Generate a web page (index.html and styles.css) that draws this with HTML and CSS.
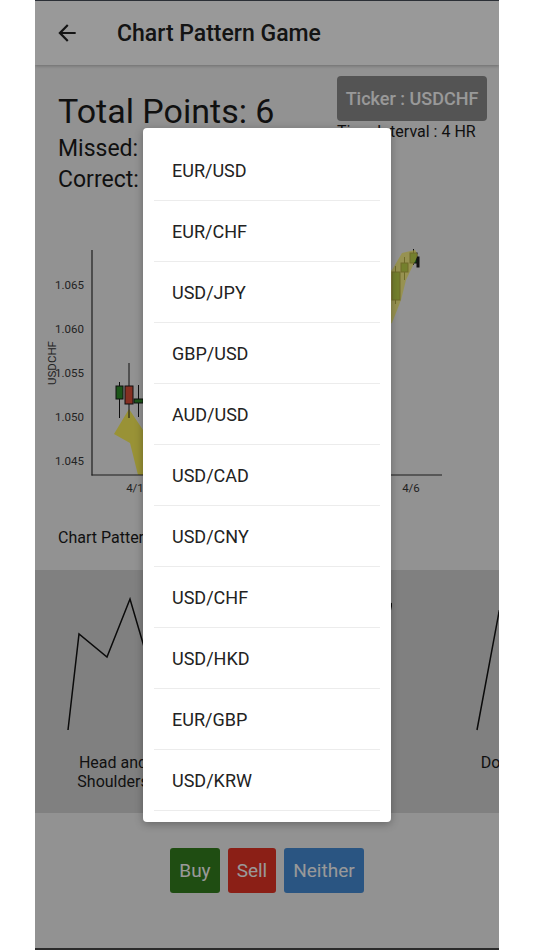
FILE: index.html
```html
<!DOCTYPE html>
<html lang="en">
<head>
    <meta charset="UTF-8">
    <meta name="viewport" content="width=device-width, initial-scale=1.0">
    <title>Chart Pattern Game</title>
    <link rel="stylesheet" href="styles.css">
</head>
<body>
    <div class="phone">
        <header class="app-bar">
            <svg class="back" viewBox="0 0 24 24" width="26" height="26">
                <path d="M20 11H7.83l5.59-5.59L12 4l-8 8 8 8 1.41-1.41L7.83 13H20v-2z" fill="#222"/>
            </svg>
            <h1 class="title">Chart Pattern Game</h1>
        </header>

        <div class="stats">
            <div class="score">
                <div class="total">Total Points: 6</div>
                <div class="line">Missed: 2</div>
                <div class="line">Correct: 6</div>
            </div>
            <div class="ticker-info">
                <div class="ticker">Ticker : USDCHF</div>
                <div class="interval">Time Interval : 4 HR</div>
            </div>
        </div>

        <!-- Candlestick chart -->
        <svg class="chart" viewBox="0 0 464 262" width="464" height="262">
            <polygon points="79,194 94,169 108,190 130,195 130,235 103,235 95,203" fill="#fff45a"/>
            <g stroke="#1a1a1a" stroke-width="1">
                <line x1="84.5" y1="142" x2="84.5" y2="178"/>
                <rect x="81" y="146" width="7" height="13" fill="#2f8f2a"/>
                <line x1="94" y1="123" x2="94" y2="178"/>
                <rect x="90" y="146" width="8" height="18" fill="#e0503a"/>
                <line x1="103.5" y1="145" x2="103.5" y2="177"/>
                <rect x="99" y="159" width="9" height="4" fill="#2f8f2a"/>
                <rect x="110" y="150" width="8" height="12" fill="#e0503a"/>
                <line x1="369.5" y1="17" x2="369.5" y2="40"/>
                <line x1="360.5" y1="26" x2="360.5" y2="64"/>
                <rect x="357" y="32" width="8" height="28" fill="#2f8f2a"/>
                <rect x="366" y="23" width="7" height="9" fill="#2f8f2a"/>
                <line x1="378.5" y1="9" x2="378.5" y2="25"/>
                <rect x="375" y="13" width="7" height="10" fill="#2f8f2a"/>
                <rect x="382" y="17" width="2" height="10" fill="#222"/>
            </g>
            <polygon points="340,90 357,83 366,60 371,40 383,15 380,10 367,13 357,30 340,40" fill="#fff45a" fill-opacity="0.7"/>
            <line x1="57" y1="10" x2="57" y2="235.5" stroke="#333" stroke-width="1.2"/>
            <line x1="56.5" y1="235" x2="407" y2="235" stroke="#333" stroke-width="1.2"/>
            <g class="tick" text-anchor="end">
                <text x="49" y="49">1.065</text>
                <text x="49" y="93">1.060</text>
                <text x="49" y="137">1.055</text>
                <text x="49" y="181">1.050</text>
                <text x="49" y="225">1.045</text>
            </g>
            <g class="tick" text-anchor="middle">
                <text x="100" y="252">4/1</text>
                <text x="376" y="252">4/6</text>
            </g>
            <text class="tick" text-anchor="middle" transform="translate(21 123) rotate(-90)">USDCHF</text>
        </svg>

        <div class="section-label">Chart Patterns:</div>

        <div class="patterns">
            <div class="pattern">
                <svg viewBox="0 0 150 175" width="150" height="175">
                    <polyline points="30,160 41,64 69,87 92,29 109,87 137,64 148,160" fill="none" stroke="#111" stroke-width="1.5"/>
                </svg>
                <div class="pattern-name">Head and Shoulders</div>
            </div>
            <div class="pattern">
                <svg viewBox="0 0 150 175" width="150" height="175">
                    <polyline points="30,40 41,120 62,95 85,150 108,95 130,120 150,33" fill="none" stroke="#111" stroke-width="1.5"/>
                </svg>
                <div class="pattern-name">Inverse Head and Shoulders</div>
            </div>
            <div class="pattern">
                <svg viewBox="0 0 150 175" width="150" height="175">
                    <polyline points="31,160 53,42 57,50 76,90 97,42 119,160" fill="none" stroke="#111" stroke-width="1.5"/>
                </svg>
                <div class="pattern-name">Double Top</div>
            </div>
        </div>

        <div class="actions">
            <button class="btn buy">Buy</button>
            <button class="btn sell">Sell</button>
            <button class="btn neither">Neither</button>
        </div>

        <!-- Ticker picker dialog -->
        <div class="overlay"></div>
        <div class="dialog">
            <ul class="pair-list">
                <li>EUR/USD</li>
                <li>EUR/CHF</li>
                <li>USD/JPY</li>
                <li>GBP/USD</li>
                <li>AUD/USD</li>
                <li>USD/CAD</li>
                <li>USD/CNY</li>
                <li>USD/CHF</li>
                <li>USD/HKD</li>
                <li>EUR/GBP</li>
                <li>USD/KRW</li>
                <li>USD/SGD</li>
            </ul>
        </div>
    </div>
</body>
</html>
```

FILE: styles.css
```css
body {
    margin: 0;
    padding: 0;
    background-color: #fff;
    font-family: Roboto, "Liberation Sans", sans-serif;
    color: #1c1c1c;
}
.phone {
    position: relative;
    width: 464px;
    height: 950px;
    margin: 0 auto;
    box-sizing: border-box;
    border-top: 1px solid #2b2f36;
    border-bottom: 2px solid #2b2b2b;
    background-color: #f3f3f3;
    overflow: hidden;
}
.app-bar {
    display: flex;
    align-items: center;
    gap: 37px;
    height: 64px;
    padding-left: 19px;
    background-color: #fff;
    box-shadow: 0 1px 3px rgba(0, 0, 0, 0.25);
}
.back {
    display: block;
}
.title {
    margin: 0;
    font-size: 23px;
    font-weight: 500;
    color: #222;
}
.stats {
    display: flex;
    justify-content: space-between;
    align-items: flex-start;
    padding: 11px 12px 0 23px;
}
.score {
    padding-top: 14px;
}
.total {
    font-size: 34px;
    line-height: 43px;
}
.line {
    font-size: 23px;
    line-height: 31px;
}
.ticker-info {
    width: 150px;
}
.ticker {
    height: 45px;
    line-height: 45px;
    text-align: center;
    border-radius: 4px;
    background-color: #8c8c8c;
    color: #fff;
    font-size: 18px;
    font-weight: 500;
}
.interval {
    margin-top: 2px;
    font-size: 16px;
    line-height: 18px;
    white-space: nowrap;
}
.chart {
    display: block;
    margin-top: 45px;
}
.tick {
    font-size: 11.5px;
    fill: #3a3a3a;
}
.section-label {
    margin: 26px 0 0 23px;
    font-size: 16px;
    line-height: 19px;
}
.patterns {
    display: flex;
    align-items: flex-start;
    gap: 54px;
    height: 243px;
    margin-top: 23px;
    padding-left: 3px;
    background-color: #d6d6d6;
    overflow: hidden;
}
.pattern {
    flex: 0 0 150px;
}
.pattern svg {
    display: block;
}
.pattern-name {
    width: 100px;
    margin: 8px auto 0;
    text-align: center;
    font-size: 16px;
    line-height: 19px;
}
.actions {
    display: flex;
    justify-content: center;
    gap: 8px;
    margin-top: 35px;
}
.btn {
    border: none;
    border-radius: 3px;
    padding: 12px 9px;
    font-family: inherit;
    font-size: 19px;
    line-height: 21px;
    color: #fff;
}
.buy {
    background-color: #34801e;
}
.sell {
    background-color: #e83426;
}
.neither {
    background-color: #468ed9;
}
.overlay {
    position: absolute;
    inset: 0;
    background-color: rgba(0, 0, 0, 0.4);
}
.dialog {
    position: absolute;
    top: 127px;
    left: 108px;
    width: 248px;
    height: 694px;
    padding: 12px 11px 0;
    box-sizing: border-box;
    background-color: #fff;
    border-radius: 4px;
    box-shadow: 0 2px 8px rgba(0, 0, 0, 0.3);
    overflow: hidden;
}
.pair-list {
    list-style: none;
    margin: 0;
    padding: 0;
}
.pair-list li {
    height: 60px;
    line-height: 62px;
    padding-left: 18px;
    border-bottom: 1px solid #ececec;
    font-size: 18px;
    color: #222;
}
```
